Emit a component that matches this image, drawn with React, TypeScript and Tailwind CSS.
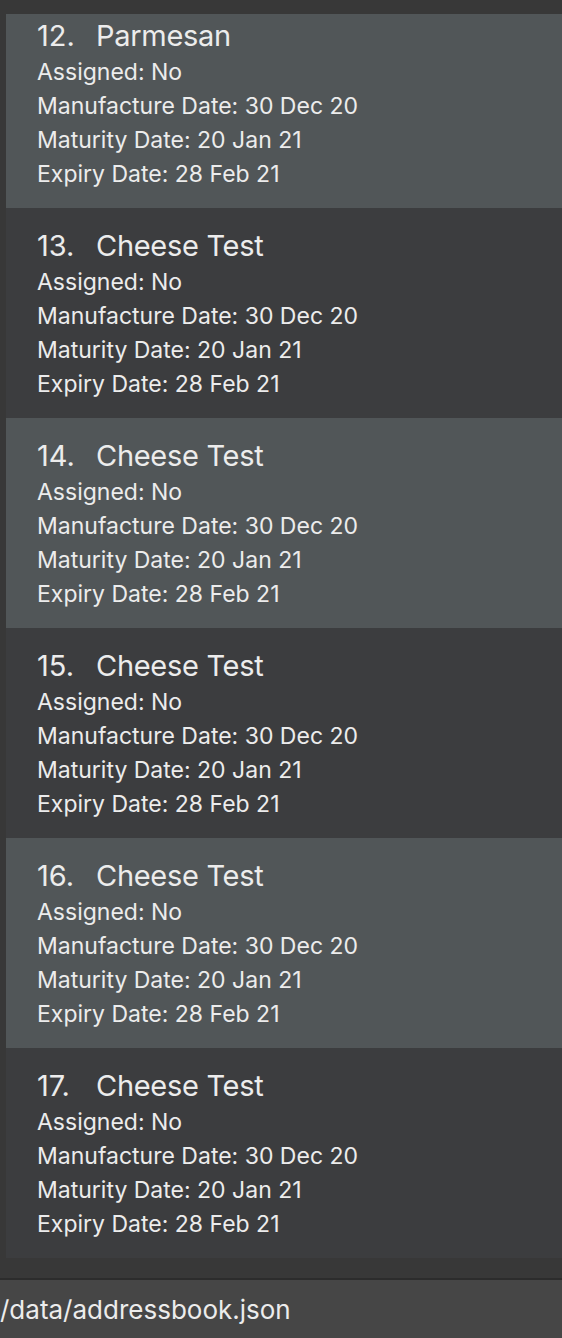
import React from "react"

type Cheese = {
  index: number
  name: string
  assigned: string
  manufacture: string
  maturity: string
  expiry: string
}

const cheeses: Cheese[] = [
  { index: 12, name: "Parmesan", assigned: "No", manufacture: "30 Dec 20", maturity: "20 Jan 21", expiry: "28 Feb 21" },
  { index: 13, name: "Cheese Test", assigned: "No", manufacture: "30 Dec 20", maturity: "20 Jan 21", expiry: "28 Feb 21" },
  { index: 14, name: "Cheese Test", assigned: "No", manufacture: "30 Dec 20", maturity: "20 Jan 21", expiry: "28 Feb 21" },
  { index: 15, name: "Cheese Test", assigned: "No", manufacture: "30 Dec 20", maturity: "20 Jan 21", expiry: "28 Feb 21" },
  { index: 16, name: "Cheese Test", assigned: "No", manufacture: "30 Dec 20", maturity: "20 Jan 21", expiry: "28 Feb 21" },
  { index: 17, name: "Cheese Test", assigned: "No", manufacture: "30 Dec 20", maturity: "20 Jan 21", expiry: "28 Feb 21" },
]

function CheeseCard({ cheese, odd, first }: { cheese: Cheese; odd: boolean; first: boolean }) {
  return (
    <div
      className={`flex flex-col pl-[31px] ${first ? "h-[194px] pt-[3px]" : "h-[210px] pt-[19px]"} ${
        odd ? "bg-[#515658]" : "bg-[#3c3d3f]"
      }`}
    >
      <div className="flex flex-row text-[29px] leading-[38px] text-[#ececec]">
        <span className="w-[59px]">{cheese.index}.</span>
        <span className="tracking-[-0.3px]">{cheese.name}</span>
      </div>
      <div className="text-[23px] leading-[34px] text-[#ececec]">
        <div>Assigned: {cheese.assigned}</div>
        <div>Manufacture Date: {cheese.manufacture}</div>
        <div>Maturity Date: {cheese.maturity}</div>
        <div>Expiry Date: {cheese.expiry}</div>
      </div>
    </div>
  )
}

export default function App() {
  return (
    <div
      className="flex h-[1338px] w-[562px] flex-col overflow-hidden bg-[#383838]"
      style={{ fontFamily: "Inter, 'Noto Sans', sans-serif" }}
    >
      <div className="flex h-[1278px] flex-col pt-[14px] pl-[6px]">
        {cheeses.map((c, i) => (
          <CheeseCard key={c.index} cheese={c} odd={i % 2 === 0} first={i === 0} />
        ))}
      </div>
      <div className="h-[2px] bg-[#2c2c2c]" />
      <div className="flex h-[58px] items-center bg-[#464646] text-[26px] text-[#ececec]">
        /data/addressbook.json
      </div>
    </div>
  )
}
